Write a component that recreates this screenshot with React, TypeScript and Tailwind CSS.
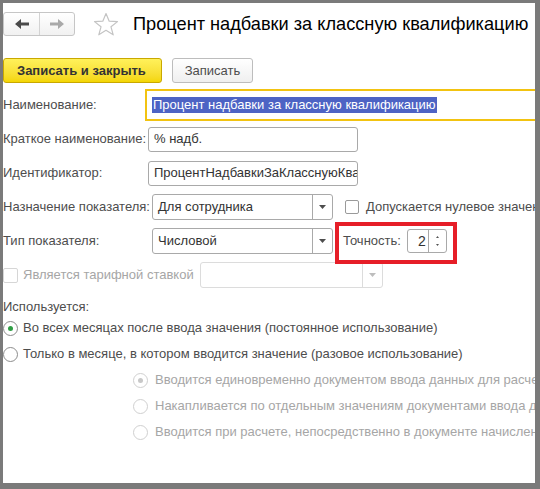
import React from 'react';

const font = { fontFamily: '"Liberation Sans", Arial, sans-serif' };

const Arrow: React.FC<{ dir: 'left' | 'right'; color: string }> = ({ dir, color }) => (
    <svg width="14" height="10" viewBox="0 0 14 10" style={{ transform: dir === 'right' ? 'scaleX(-1)' : undefined }}>
        <path d="M0 5 L6 0 L6 3.5 L14 3.5 L14 6.5 L6 6.5 L6 10 Z" fill={color} />
    </svg>
);

const Star = () => (
    <svg width="26" height="24" viewBox="0 0 26 24">
        <path d="M13 1.5 L16.2 9.2 L24.5 9.6 L18 14.8 L20.2 22.8 L13 18.3 L5.8 22.8 L8 14.8 L1.5 9.6 L9.8 9.2 Z" fill="none" stroke="#c4c4c4" strokeWidth="1.2" strokeLinejoin="round" />
    </svg>
);

const DropArrow: React.FC<{ light?: boolean }> = ({ light }) => (
    <svg width="7" height="4" viewBox="0 0 7 4">
        <path d="M0 0 L7 0 L3.5 4 Z" fill={light ? '#bdbdbd' : '#4d4d4d'} />
    </svg>
);

const Select: React.FC<{ value?: string; width: string; disabled?: boolean }> = ({ value, width, disabled }) => (
    <div className={`flex h-[26px] shrink-0 ${width} items-stretch rounded-[3px] border ${disabled ? 'border-[#dcdcdc]' : 'border-[#a9a9a9]'} bg-white`}>
        <div className="flex flex-1 items-center pl-[5px] text-[13px] text-[#333]">{value}</div>
        <div className={`flex w-[20px] items-center justify-center border-l ${disabled ? 'border-[#dcdcdc]' : 'border-[#a9a9a9]'}`}>
            <DropArrow light={disabled} />
        </div>
    </div>
);

const Radio: React.FC<{ checked?: boolean; disabled?: boolean }> = ({ checked, disabled }) => (
    <div className={`flex h-[15px] w-[15px] shrink-0 items-center justify-center rounded-full border ${disabled ? 'border-[#d0d0d0]' : 'border-[#8c8c8c]'} bg-white`}>
        {checked && <div className={`h-[5px] w-[5px] rounded-full ${disabled ? 'bg-[#c8c8c8]' : 'bg-[#2f9e44]'}`} />}
    </div>
);

export default function App() {
    return (
        <div style={font} className="h-[489px] w-[540px] overflow-hidden border-b-[6px] border-l-[3px] border-r-[5px] border-t-[3px] border-[#7a7a7a] bg-white text-[13px] text-[#4d4d4d]">
            {/* header */}
            <div className="mt-[9px] flex h-[24px] items-center">
                <div className="flex h-[24px] w-[72px] shrink-0 rounded-[3px] border border-[#c6c6c6] bg-gradient-to-b from-white to-[#f1f1f1]">
                    <div className="flex w-[36px] items-center justify-center border-r border-[#d3d3d3]">
                        <Arrow dir="left" color="#4a4a4a" />
                    </div>
                    <div className="flex flex-1 items-center justify-center">
                        <Arrow dir="right" color="#a9a9a9" />
                    </div>
                </div>
                <div className="ml-[18px] shrink-0"><Star /></div>
                <h1 className="ml-[14px] whitespace-nowrap text-[18.2px] leading-none text-black">Процент надбавки за классную квалификацию</h1>
            </div>

            {/* command bar */}
            <div className="mt-[22px] flex h-[25px] items-stretch gap-[10px]">
                <button className="w-[159px] shrink-0 rounded-[3px] border border-[#c9a800] bg-gradient-to-b from-[#fff15a] to-[#f4d600] pl-[1px] text-left text-[13px] font-bold text-[#333]">
                    <span className="pl-[12px]">Записать и закрыть</span>
                </button>
                <button className="w-[81px] shrink-0 rounded-[3px] border border-[#bdbdbd] bg-gradient-to-b from-white to-[#efefef] text-[13px] text-[#4d4d4d]">
                    Записать
                </button>
            </div>

            {/* fields */}
            <div className="mt-[5px] flex flex-col">
                <div className="flex h-[34px] items-center">
                    <div className="w-[142px] shrink-0">Наименование:</div>
                    <div className="flex h-[32px] min-w-0 flex-1 items-center overflow-hidden border-2 border-r-0 border-[#f2c311] pl-[5px]">
                        <span className="whitespace-nowrap bg-[#4d63c4] px-[1px] leading-[16px] text-white">Процент надбавки за классную квалификацию</span>
                    </div>
                </div>
                <div className="flex h-[34px] items-center">
                    <div className="w-[145px] shrink-0 whitespace-nowrap">Краткое наименование:</div>
                    <div className="flex h-[25px] w-[210px] shrink-0 items-center rounded-[3px] border border-[#a9a9a9] pl-[5px] text-[#333]">% надб.</div>
                </div>
                <div className="flex h-[34px] items-center">
                    <div className="w-[145px] shrink-0">Идентификатор:</div>
                    <div className="flex h-[25px] w-[210px] shrink-0 items-center overflow-hidden whitespace-nowrap rounded-[3px] border border-[#a9a9a9] pl-[5px] text-[#333]">ПроцентНадбавкиЗаКлассную­Ква</div>
                </div>
                <div className="flex h-[34px] items-center">
                    <div className="w-[149px] shrink-0 whitespace-nowrap">Назначение показателя:</div>
                    <Select value="Для сотрудника" width="w-[181px]" />
                    <div className="ml-[12px] h-[14px] w-[14px] shrink-0 rounded-[2px] border border-[#9a9a9a] bg-white" />
                    <div className="ml-[7px] whitespace-nowrap">Допускается нулевое значение</div>
                </div>
                <div className="relative flex h-[34px] items-center">
                    <div className="w-[149px] shrink-0">Тип показателя:</div>
                    <Select value="Числовой" width="w-[181px]" />
                    <div className="ml-[10px] shrink-0">Точность:</div>
                    <div className="ml-[6px] flex h-[24px] w-[40px] shrink-0 rounded-[3px] border border-[#a9a9a9]">
                        <div className="flex w-[20px] items-center justify-end pr-[2px] text-[14px] text-[#333]">2</div>
                        <div className="flex flex-1 flex-col items-center justify-center gap-[6px] border-l border-[#a9a9a9]">
                            <svg width="3" height="2" viewBox="0 0 3 2"><path d="M0 2 L3 2 L1.5 0 Z" fill="#555" /></svg>
                            <svg width="3" height="2" viewBox="0 0 3 2"><path d="M0 0 L3 0 L1.5 2 Z" fill="#555" /></svg>
                        </div>
                    </div>
                    <div className="absolute left-[332px] top-[-2px] h-[42px] w-[122px] border-[4px] border-[#e61e28]" />
                </div>
                <div className="flex h-[34px] items-center">
                    <div className="h-[15px] w-[15px] shrink-0 rounded-[2px] border border-[#d6d6d6] bg-white" />
                    <div className="ml-[5px] w-[177px] shrink-0 whitespace-nowrap text-[#a6a6a6]">Является тарифной ставкой</div>
                    <Select width="w-[183px]" disabled />
                </div>
            </div>

            {/* usage */}
            <div className="mt-[7px] leading-[16px]">Используется:</div>
            <div className="flex flex-col">
                <div className="flex h-[26px] items-center">
                    <Radio checked />
                    <div className="ml-[5px] whitespace-nowrap">Во всех месяцах после ввода значения (постоянное использование)</div>
                </div>
                <div className="flex h-[26px] items-center">
                    <Radio />
                    <div className="ml-[5px] whitespace-nowrap">Только в месяце, в котором вводится значение (разовое использование)</div>
                </div>
                <div className="flex h-[26px] items-center pl-[130px] text-[#a6a6a6]">
                    <Radio checked disabled />
                    <div className="ml-[7px] whitespace-nowrap">Вводится единовременно документом ввода данных для расчета</div>
                </div>
                <div className="flex h-[26px] items-center pl-[130px] text-[#a6a6a6]">
                    <Radio disabled />
                    <div className="ml-[7px] whitespace-nowrap">Накапливается по отдельным значениям документами ввода д</div>
                </div>
                <div className="flex h-[26px] items-center pl-[130px] text-[#a6a6a6]">
                    <Radio disabled />
                    <div className="ml-[7px] whitespace-nowrap">Вводится при расчете, непосредственно в документе начислен</div>
                </div>
            </div>
        </div>
    );
}
